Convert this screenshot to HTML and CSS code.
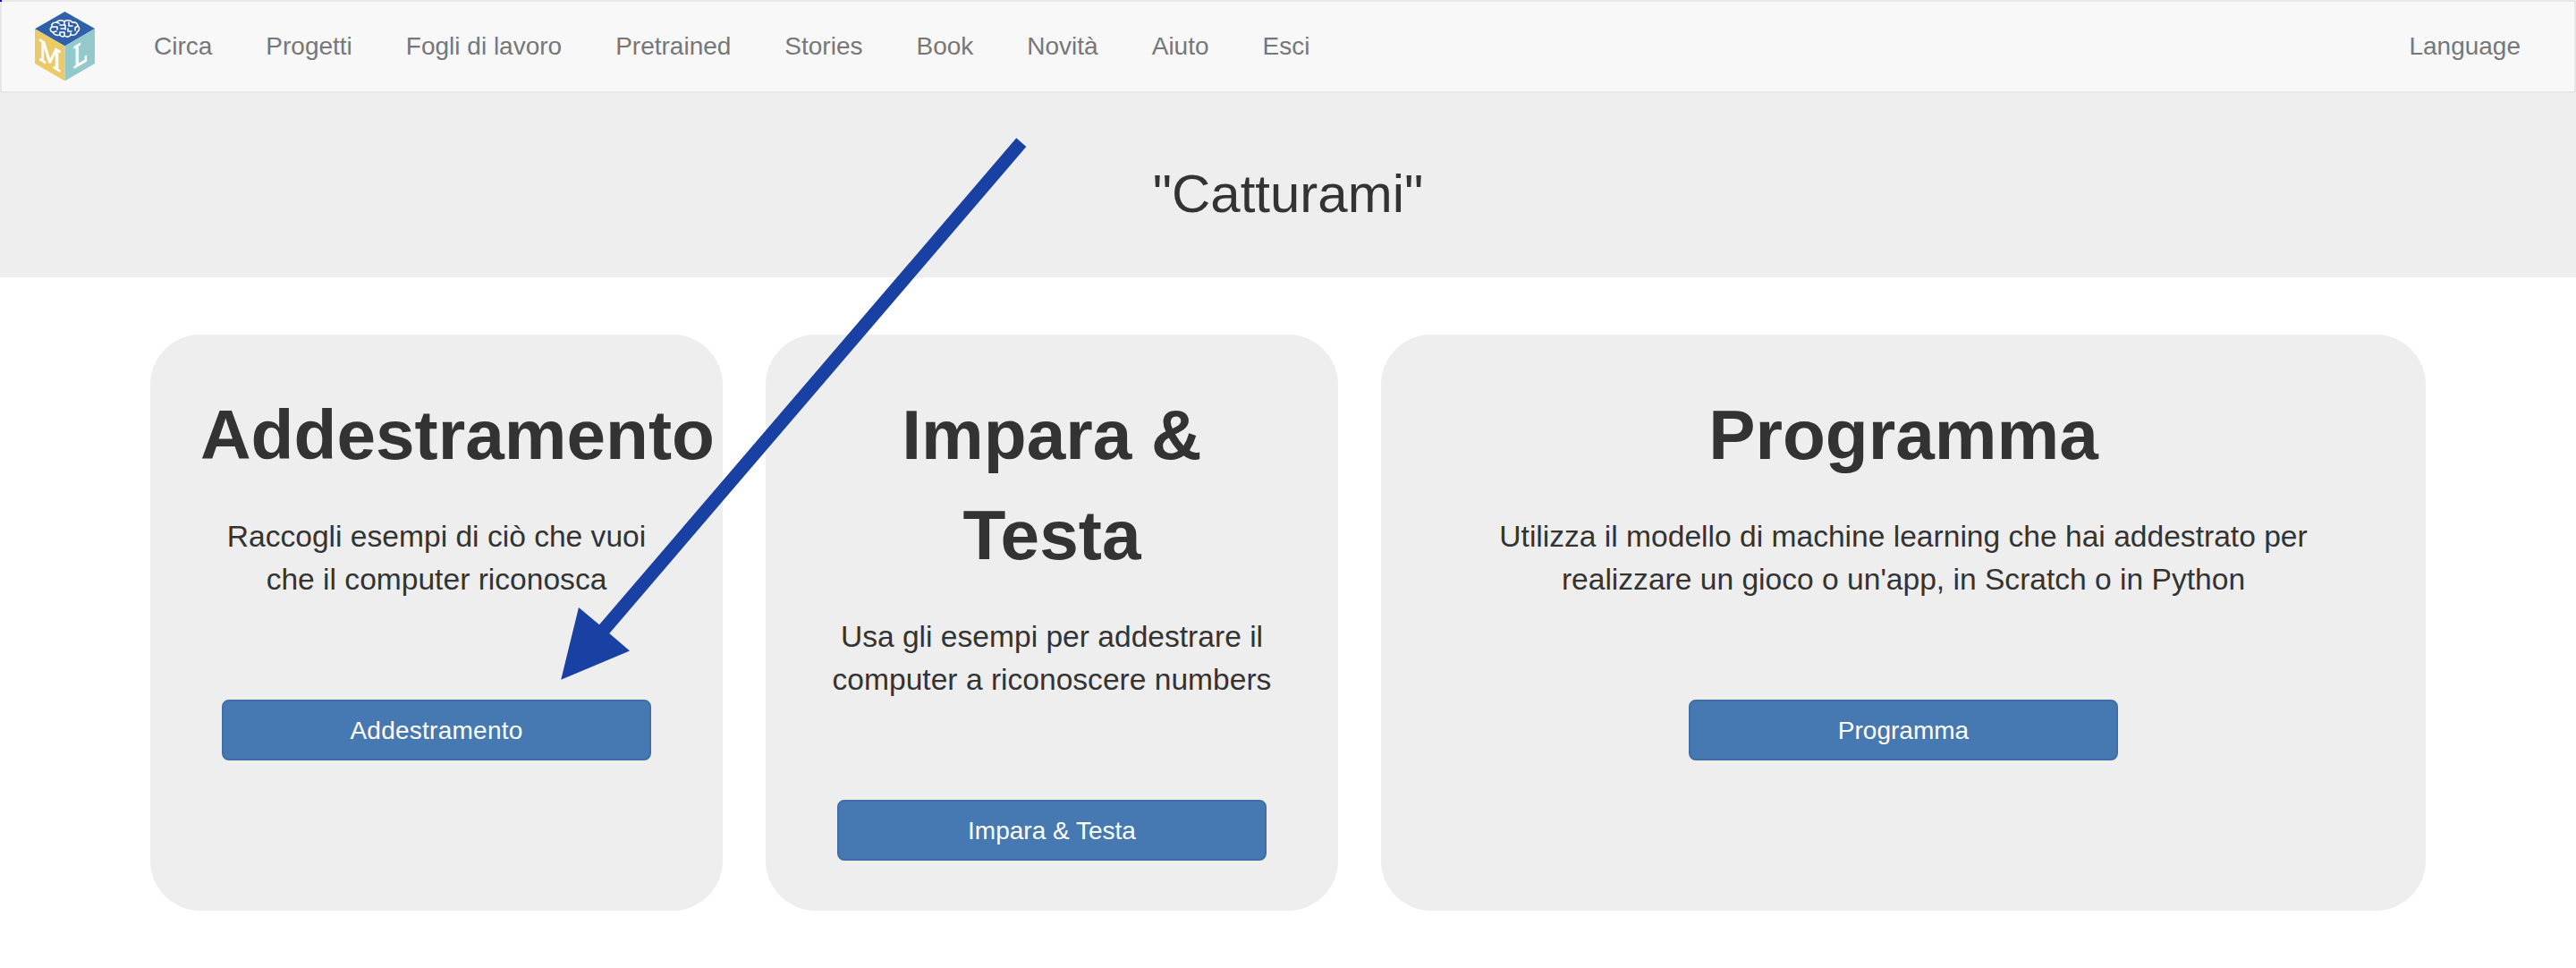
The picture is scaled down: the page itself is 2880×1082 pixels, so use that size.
FILE: index.html
```html
<!DOCTYPE html>
<html lang="it">
<head>
<meta charset="utf-8">
<title>Catturami</title>
<link rel="stylesheet" href="styles.css">
</head>
<body>
<span class="corner-mark"></span>
<nav class="navbar">
  <a class="brand" aria-label="Machine Learning">
    <svg width="68" height="78" viewBox="0 0 68 78">
      <path d="M33.5 0 67 19 33.5 38.5 0 19.3Z" fill="#2f61a8"/>
      <path d="M0 19.3 33.5 38.5V77.5L0 58Z" fill="#ebca68"/>
      <path d="M67 19 33.5 38.5V77.5L67 58Z" fill="#93c9ca"/>
      <g fill="none" stroke="#fff" stroke-width="1.6" stroke-linecap="round" stroke-linejoin="round">
        <path d="M32 10.500C29 9 25 10 24 12C20 12 18 14 19 17C16 19 17 22 20 23C21 26 25 27 28 26C29 28 32 28.500 33.500 27C36 29 39 28 40 26C44 27 47 25 47 23C50 21 50.500 18 48 16C48 13 45 11.500 42 12C40 9.500 35 9 33 11"/>
        <path d="M33 11V15H28M24 12L27 13M19 17H25V20M29 19H34M20 23L24 22M28 26V23H33V27M38 12V16H42M37 19V22H41M40 26V24M48 16L45 18V21M34 15V20"/>
      </g>
      <text class="letter" transform="matrix(.86 .5 0 1 4.500 53.500)" font-size="32" textLength="29" lengthAdjust="spacingAndGlyphs">M</text>
      <text class="letter" transform="matrix(.86 -.5 0 1 42.500 64)" font-size="33" textLength="18" lengthAdjust="spacingAndGlyphs">L</text>
    </svg>
  </a>
  <ul class="menu">
    <li>Circa</li><li>Progetti</li><li>Fogli di lavoro</li><li>Pretrained</li><li>Stories</li><li>Book</li><li>Novità</li><li>Aiuto</li><li>Esci</li>
  </ul>
  <span class="language">Language</span>
</nav>
<header class="hero"><h2>"Catturami"</h2></header>
<main class="cards">
  <section class="card">
    <h1>Addestramento</h1>
    <p>Raccogli esempi di ciò che vuoi<br>che il computer riconosca</p>
    <button class="btn btn-train">Addestramento</button>
  </section>
  <section class="card">
    <h1>Impara &amp; Testa</h1>
    <p>Usa gli esempi per addestrare il<br>computer a riconoscere numbers</p>
    <button class="btn">Impara &amp; Testa</button>
  </section>
  <section class="card">
    <h1>Programma</h1>
    <p>Utilizza il modello di machine learning che hai addestrato per<br>realizzare un gioco o un'app, in Scratch o in Python</p>
    <button class="btn">Programma</button>
  </section>
</main>
<svg class="arrow" width="524" height="610" viewBox="626 152 524 610">
  <path d="M1136.300 154.300 1147.300 164 681.300 708 704 727.500 627.200 759.700 647 679 670 698.300Z" fill="#1940a3"/>
</svg>
</body>
</html>
```
FILE: styles.css
```css
* { box-sizing: border-box; }
body {
  margin: 0;
  background: #fff;
  color: #333;
  font-family: "Liberation Sans", Arial, sans-serif;
  overflow: hidden;
}
.corner-mark {
  position: absolute;
  top: 0;
  left: 0;
  width: 2px;
  height: 2px;
  background: #00f;
}
.navbar {
  display: flex;
  height: 104px;
  border: 2px solid #e7e7e7;
  background: #f8f8f8;
  color: #777;
  font-size: 28px;
  line-height: 40px;
  padding: 0 60px 0 37px;
}
.brand { width: 133px; padding-top: 11px; }
.brand svg { display: block; }
.letter {
  font-family: "DejaVu Serif", serif;
  fill: #fff;
  stroke: #fff;
  stroke-width: 1.1px;
}
.menu {
  display: flex;
  gap: 60px;
  margin: 0;
  padding: 30px 0 0;
  list-style: none;
}
.language { margin-left: auto; padding-top: 30px; }
.hero {
  height: 206px;
  background: #eee;
  display: flex;
  align-items: center;
  justify-content: center;
}
.hero h2 {
  margin: 0 0 -20px;
  font-size: 60px;
  font-weight: 400;
  line-height: 66px;
}
.cards {
  display: grid;
  grid-template-columns: 640px 640px 1168px;
  gap: 48px;
  padding: 64px 168px;
}
.card {
  height: 644px;
  padding: 56px;
  border-radius: 56px;
  background: #eee;
  display: flex;
  flex-direction: column;
  align-items: center;
  text-align: center;
}
.card h1 {
  width: 100%;
  margin: 0 0 34px;
  font-size: 78.400px;
  line-height: 112px;
}
.card p {
  margin: 0 0 110px;
  font-size: 33.6px;
  line-height: 48px;
  white-space: nowrap;
}
.btn {
  width: 480px;
  height: 68px;
  padding: 2px 0 0;
  border: 2px solid #3e6da8;
  border-radius: 8px;
  background: #4679b2;
  color: #fff;
  font: 28px "Liberation Sans", Arial, sans-serif;
}
.btn-train { letter-spacing: .25px; }
.arrow { position: absolute; left: 626px; top: 152px; }
```
